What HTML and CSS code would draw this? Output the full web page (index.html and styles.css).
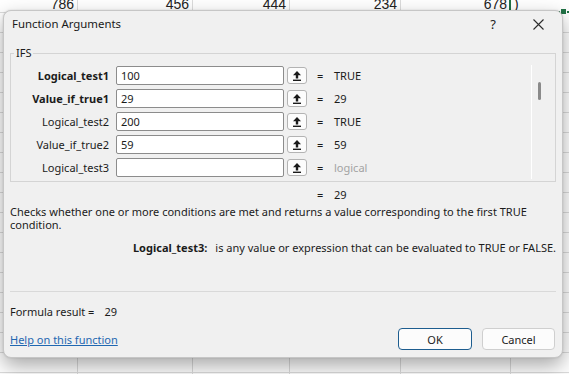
FILE: index.html
```html
<!DOCTYPE html>
<html>
<head>
<meta charset="utf-8">
<link rel="stylesheet" href="styles.css">
</head>
<body>
<div class="sheet">
  <div class="col c1"><div class="cell">786</div></div>
  <div class="col c2"><div class="cell">456</div></div>
  <div class="col c3"><div class="cell">444</div></div>
  <div class="col c4"><div class="cell">234</div></div>
  <div class="col c5"><div class="cell">678</div></div>
  <div class="col c6"><div class="cell sel">)</div></div>
</div>

<div class="dialog">
  <div class="titlebar">
    <span class="title">Function Arguments</span>
    <span class="help">?</span>
    <svg class="close" width="11" height="11" viewBox="0 0 11 11"><path d="M0.5 0.5 L10.5 10.5 M10.5 0.5 L0.5 10.5" stroke="#2b2b2b" stroke-width="1.1" fill="none"/></svg>
  </div>

  <div class="group">
    <div class="legend">IFS</div>
    <div class="args">
      <div class="rows">
        <div class="arg"><span class="lbl bold">Logical_test1</span><span class="input">100</span><span class="ref"><svg width="8" height="10" viewBox="0 0 8 10"><polygon points="4,0 8,4.2 5.2,4.2 5.2,7.6 2.8,7.6 2.8,4.2 0,4.2" fill="#1a1a1a"/><rect x="0" y="8.6" width="8" height="1.4" fill="#1a1a1a"/></svg></span><span class="eq">=</span><span class="val">TRUE</span></div>
        <div class="arg"><span class="lbl bold">Value_if_true1</span><span class="input">29</span><span class="ref"><svg width="8" height="10" viewBox="0 0 8 10"><polygon points="4,0 8,4.2 5.2,4.2 5.2,7.6 2.8,7.6 2.8,4.2 0,4.2" fill="#1a1a1a"/><rect x="0" y="8.6" width="8" height="1.4" fill="#1a1a1a"/></svg></span><span class="eq">=</span><span class="val">29</span></div>
        <div class="arg"><span class="lbl">Logical_test2</span><span class="input">200</span><span class="ref"><svg width="8" height="10" viewBox="0 0 8 10"><polygon points="4,0 8,4.2 5.2,4.2 5.2,7.6 2.8,7.6 2.8,4.2 0,4.2" fill="#1a1a1a"/><rect x="0" y="8.6" width="8" height="1.4" fill="#1a1a1a"/></svg></span><span class="eq">=</span><span class="val">TRUE</span></div>
        <div class="arg"><span class="lbl">Value_if_true2</span><span class="input">59</span><span class="ref"><svg width="8" height="10" viewBox="0 0 8 10"><polygon points="4,0 8,4.2 5.2,4.2 5.2,7.6 2.8,7.6 2.8,4.2 0,4.2" fill="#1a1a1a"/><rect x="0" y="8.6" width="8" height="1.4" fill="#1a1a1a"/></svg></span><span class="eq">=</span><span class="val">59</span></div>
        <div class="arg"><span class="lbl">Logical_test3</span><span class="input"></span><span class="ref"><svg width="8" height="10" viewBox="0 0 8 10"><polygon points="4,0 8,4.2 5.2,4.2 5.2,7.6 2.8,7.6 2.8,4.2 0,4.2" fill="#1a1a1a"/><rect x="0" y="8.6" width="8" height="1.4" fill="#1a1a1a"/></svg></span><span class="eq">=</span><span class="val muted">logical</span></div>
      </div>
      <div class="scroll"><div class="thumb"></div></div>
    </div>
  </div>

  <div class="result"><span class="eq">=</span><span class="val">29</span></div>
  <p class="desc">Checks whether one or more conditions are met and returns a value corresponding to the first TRUE condition.</p>
  <p class="argdesc"><b>Logical_test3:</b><span class="argtext">is any value or expression that can be evaluated to TRUE or FALSE.</span></p>
  <div class="sep"></div>
  <div class="formula">Formula result =<span class="fval">29</span></div>
  <div class="footer">
    <a class="link" href="#">Help on this function</a>
    <div class="btns">
      <button class="btn ok">OK</button>
      <button class="btn">Cancel</button>
    </div>
  </div>
</div>
</body>
</html>
```

FILE: styles.css
```css
* { box-sizing: border-box; margin: 0; padding: 0; }
html, body { width: 569px; height: 374px; overflow: hidden; }
body {
  font-family: "Noto Sans", "Open Sans", sans-serif;
  font-size: 11px;
  color: #1b1b1b;
  background: #fff;
  position: relative;
}

/* spreadsheet behind */
.sheet {
  display: flex;
  height: 381px;
  margin-top: -7px;
  overflow: hidden;
  background: repeating-linear-gradient(to bottom, transparent 0 19px, #dcdcdc 19px 20px);
}
.col {
  border-right: 1px solid #dcdcdc;
  font-family: "Liberation Sans", Arial, sans-serif;
  font-size: 14px;
  color: #222;
  text-align: right;
}
.c1 { width: 78px; }
.c2 { width: 115px; }
.c3 { width: 97px; }
.c4 { width: 111px; }
.c5 { width: 110px; }
.c6 { flex: 1; border-right: 0; }
.cell { height: 20px; line-height: 22px; padding-right: 3px; background: #fff; border-bottom: 1px solid #dcdcdc; }
.sel {
  position: relative;
  text-align: left;
  padding-left: 3px;
  border-left: 2px solid #217346;
  margin-left: -2px;
  border-bottom: 2px solid #217346;
}
.sel::after {
  content: "";
  position: absolute;
  right: 2px;
  bottom: -4px;
  width: 5px;
  height: 5px;
  background: #217346;
  border: 1px solid #fff;
}

/* dialog */
.dialog {
  position: absolute;
  left: 3px;
  top: 10px;
  width: 560px;
  height: 348px;
  background: #f0f0f0;
  border: 1px solid #c6c6c6;
  border-radius: 8px;
  box-shadow: 0 8px 20px rgba(0,0,0,0.34), 0 0 2px rgba(0,0,0,0.14);
  padding: 0 6px;
  display: flex;
  flex-direction: column;
}
.titlebar {
  height: 35px;
  display: flex;
  align-items: flex-start;
  padding: 5px 0 0 2px;
}
.title { flex: 1; font-size: 11.4px; line-height: 16px; color: #1a1a1a; }
.help { font-size: 13px; line-height: 16px; color: #222; }
.close { margin: 3px 12px 0 37px; }

.group {
  border: 1px solid #d4d4d4;
  margin-top: 7px;
  padding-bottom: 4px;
}
.legend {
  margin: -8px 0 0 3px;
  width: fit-content;
  padding: 0 2px;
  background: #f0f0f0;
  line-height: 14px;
  font-size: 11px;
}
.args { display: flex; margin-top: 6px; }
.rows { width: 520px; display: flex; flex-direction: column; gap: 4px; }
.arg { display: flex; align-items: center; height: 19px; }
.lbl { width: 98px; margin-right: 7px; text-align: right; white-space: nowrap; }
.bold { font-weight: 700; }
.input {
  width: 168px;
  height: 19px;
  background: #fff;
  border: 1px solid #8c8c8c;
  border-radius: 2px;
  padding-left: 4px;
  line-height: 17px;
}
.ref {
  width: 20px;
  height: 17px;
  margin-left: 3px;
  border: 1px solid #b3b3b3;
  border-radius: 3px;
  background: #fcfcfc;
  display: flex;
  align-items: center;
  justify-content: center;
}
.eq { width: 6px; margin-left: 10px; text-align: center; }
.val { margin-left: 11px; }
.muted { color: #a3a3a3; }
.scroll {
  flex: 1;
  border-left: 1px solid #ffffff;
  margin: -1px 0 -2px;
  padding: 17px 0 0 6px;
}
.thumb { width: 3px; height: 18px; background: #8a8a8a; border-radius: 2px; }

.result { display: flex; margin-top: 6px; padding-left: 297px; line-height: 14px; }
.desc { margin-top: 3px; line-height: 13px; }
.argdesc { margin-top: 10px; line-height: 14px; text-align: right; }
.argtext { margin-left: 8px; }
.sep { margin-top: 36px; height: 1px; background: #d9d9d9; }
.formula { margin-top: 13px; line-height: 14px; }
.fval { margin-left: 10px; }
.footer {
  margin-top: 9px;
  display: flex;
  align-items: center;
  justify-content: space-between;
  padding-right: 1px;
}
.link { color: #1f67b1; text-decoration: underline; font-size: 11px; }
.btns { display: flex; gap: 10px; }
.btn {
  width: 73px;
  height: 22px;
  border: 1px solid #cfcfcf;
  border-radius: 4px;
  background: #fcfcfc;
  font-family: inherit;
  font-size: 11px;
  color: #1b1b1b;
}
.ok { width: 74px; border-color: #1d5d8f; }
```
